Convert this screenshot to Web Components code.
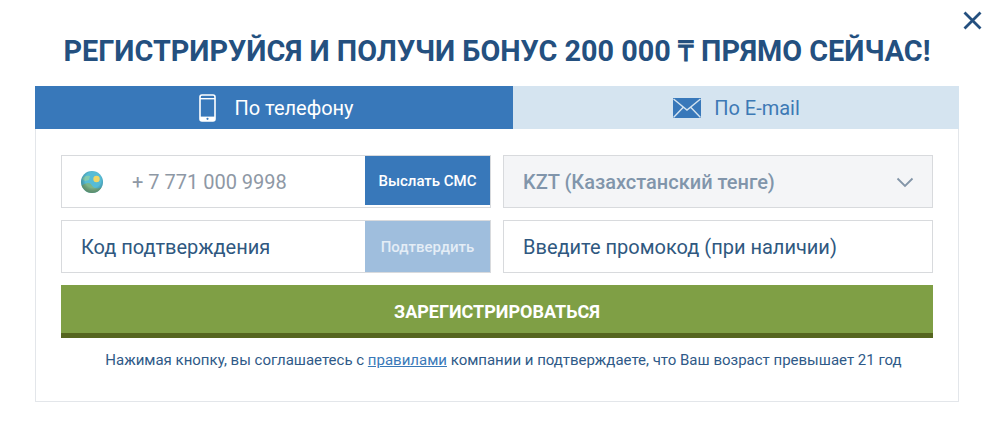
<!DOCTYPE html>
<html lang="ru">
<head>
<meta charset="utf-8">
<title>Регистрация</title>
<style>
html,body{margin:0;padding:0;background:#fff}
body{font-family:Roboto,"Liberation Sans",sans-serif;width:991px;height:436px;overflow:hidden}
</style>
</head>
<body>
<reg-modal>
  <reg-tabs slot="tabs"></reg-tabs>
  <reg-field slot="fields" kind="phone" text="+ 7 771 000 9998" action="Выслать СМС"></reg-field>
  <reg-field slot="fields" kind="select" text="KZT (Казахстанский тенге)"></reg-field>
  <reg-field slot="fields" text="Код подтверждения" action="Подтвердить" disabled></reg-field>
  <reg-field slot="fields" text="Введите промокод (при наличии)"></reg-field>
</reg-modal>
<script>
// registration modal, built from small components
class RegModal extends HTMLElement {
  constructor(){
    super();
    this.attachShadow({mode:'open'});
    this.shadowRoot.innerHTML = `
      <style>
        :host{display:block;position:relative;width:991px;height:436px;box-sizing:border-box;padding:0 32px 0 35px}
        h1{margin:0;height:86px;box-sizing:border-box;padding-top:34px;text-align:center;font-size:28.8px;line-height:34px;font-weight:700;color:#24507f;white-space:nowrap}
        .close{position:absolute;left:962px;top:10px;width:21px;height:21px;display:block}
        .panel{border:1px solid #e3e6ea;border-top:0;height:273px;box-sizing:border-box}
        .form{padding:26px 25px 0}
        .grid{display:grid;grid-template-columns:430px 430px;column-gap:12px;row-gap:12px}
        .submit{display:block;width:100%;height:53px;margin-top:12px;border:0;border-bottom:5px solid #55651f;box-sizing:border-box;background:#7f9f45;color:#fff;font:700 18px Roboto,sans-serif;padding:4px 0 0}
        p{margin:13px 0 0;padding-left:13px;text-align:center;font-size:15px;line-height:18px;color:#2f5a88}
        a{color:#3a79b8;text-decoration:underline}
      </style>
      <h1>РЕГИСТРИРУЙСЯ И ПОЛУЧИ БОНУС 200 000 ₸ ПРЯМО СЕЙЧАС!</h1>
      <svg class="close" viewBox="0 0 21 21"><path d="M2.5 2.5l16 16M18.5 2.5l-16 16" stroke="#24507f" stroke-width="2.8" fill="none"/></svg>
      <slot name="tabs"></slot>
      <div class="panel">
        <div class="form">
          <div class="grid"><slot name="fields"></slot></div>
          <button class="submit">ЗАРЕГИСТРИРОВАТЬСЯ</button>
          <p>Нажимая кнопку, вы соглашаетесь с <a href="#">правилами</a> компании и подтверждаете, что Ваш возраст превышает 21 год</p>
        </div>
      </div>
    `;
  }
}

class RegTabs extends HTMLElement {
  constructor(){
    super();
    this.attachShadow({mode:'open'});
    this.shadowRoot.innerHTML = `
      <style>
        :host{display:flex;height:43px;width:924px}
        .tab{display:flex;align-items:center;justify-content:center;font-size:20px;line-height:24px;padding-top:1px;box-sizing:border-box}
        .on{width:478px;background:#3878ba;color:#fff;padding-left:5px}
        .off{width:446px;background:#d5e4f0;color:#3d79b5;padding-left:1px}
        .phone{width:17px;height:28px;margin-right:18px}
        .mail{width:28px;height:20px;margin-right:13px}
      </style>
      <div class="tab on">
        <svg class="phone" viewBox="0 0 17 28"><rect x="1" y="1" width="15" height="26" rx="2" fill="none" stroke="#fff" stroke-width="1.6"/><rect x="1" y="4" width="15" height="1.4" fill="#fff"/><rect x="1" y="22.6" width="15" height="4.4" fill="#fff"/><circle cx="8.5" cy="24.8" r="1.1" fill="#3878ba"/></svg>
        <span>По телефону</span>
      </div>
      <div class="tab off">
        <svg class="mail" viewBox="0 0 28 20"><rect width="28" height="20" fill="#3878ba"/><path d="M0.5 1l13.5 11 13.5-11M0.5 19.5l10-10.5M27.5 19.5l-10-10.5" fill="none" stroke="#d5e4f0" stroke-width="1.4"/></svg>
        <span>По E-mail</span>
      </div>
    `;
  }
}

class RegField extends HTMLElement {
  constructor(){
    super();
    this.attachShadow({mode:'open'});
  }
  connectedCallback(){
    const kind = this.getAttribute('kind')||'';
    const text = this.getAttribute('text')||'';
    const action = this.getAttribute('action');
    const off = this.hasAttribute('disabled');
    // kazakhstan flag as a small globe
    const flag = kind==='phone' ? `<svg class="flag" viewBox="0 0 22 22">
        <defs>
          <clipPath id="g"><circle cx="11" cy="11" r="11"/></clipPath>
          <radialGradient id="s" cx="0.55" cy="0.4" r="0.65"><stop offset="0.55" stop-color="#000" stop-opacity="0"/><stop offset="1" stop-color="#2a5a50" stop-opacity="0.45"/></radialGradient>
        </defs>
        <g clip-path="url(#g)">
          <rect width="22" height="22" fill="#56bcd6"/>
          <path d="M0 15c3-2 5-3 8-3 3 1 3 4 6 5 3 1 5 0 8-1v6H0z" fill="#7cb58a"/>
          <path d="M1 8c2-3 5-4 8-3l-1 4-4 1z" fill="#84cbb0"/>
          <circle cx="15.5" cy="8" r="3.2" fill="#f0d766"/>
          <rect width="22" height="22" fill="url(#s)"/>
        </g>
      </svg>` : '';
    const arrow = kind==='select' ? `<svg class="arrow" viewBox="0 0 18 11"><path d="M1.5 1.5L9 9l7.5-7.5" fill="none" stroke="#8395a8" stroke-width="1.8"/></svg>` : '';
    const btn = action ? `<button class="${off?'dim':''}">${action}</button>` : '';
    this.shadowRoot.innerHTML = `
      <style>
        :host{display:flex;height:53px;box-sizing:border-box;border:1px solid #d8dadd;background:#fff;align-items:stretch}
        :host([kind=select]){background:#f4f5f7}
        .text{flex:1;display:flex;align-items:center;padding-left:19px;font-size:20px;color:#2f5880;white-space:nowrap}
        :host([kind=phone]) .text{color:#8e98a5}
        :host([kind=select]) .text{color:#8195ab;font-weight:500}
        .flag{width:22px;height:22px;margin-right:29px;flex:none}
        .arrow{width:18px;height:11px;margin:2px 18px 0 0;align-self:center;flex:none}
        button{width:125px;margin:0;padding:0;border:0;background:#3878ba;color:#fff;font:500 15px Roboto,sans-serif;border-bottom:2px solid #fff}
        button.dim{background:#9fbedd;border-bottom:0;color:#e4edf6;font-weight:500;font-size:15px}
      </style>
      <div class="text">${flag}<span>${text}</span></div>${arrow}${btn}
    `;
  }
}

customElements.define('reg-field', RegField);
customElements.define('reg-tabs', RegTabs);
customElements.define('reg-modal', RegModal);
</script>
</body>
</html>
